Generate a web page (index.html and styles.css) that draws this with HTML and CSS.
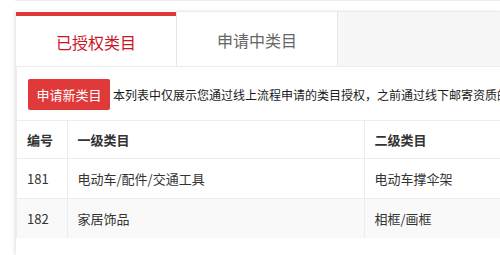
FILE: index.html
```html
<!DOCTYPE html>
<html lang="zh-CN">
<head>
<meta charset="utf-8">
<link rel="stylesheet" href="styles.css">
</head>
<body>
<div class="topline"></div>
<div class="card">
  <div class="tabs">
    <div class="tab active">已授权类目</div>
    <div class="tab">申请中类目</div>
  </div>
  <div class="panel">
    <div class="toolbar">
      <button class="btn">申请新类目</button>
      <span class="notice">本列表中仅展示您通过线上流程申请的类目授权，之前通过线下邮寄资质的类目授权请联系小二查询</span>
    </div>
    <table class="grid">
      <thead>
        <tr><th class="c1">编号</th><th class="c2">一级类目</th><th class="c3">二级类目</th></tr>
      </thead>
      <tbody>
        <tr><td>181</td><td>电动车/配件/交通工具</td><td>电动车撑伞架</td></tr>
        <tr class="alt"><td>182</td><td>家居饰品</td><td>相框/画框</td></tr>
      </tbody>
    </table>
  </div>
</div>
</body>
</html>
```

FILE: styles.css
```css
html, body {
  margin: 0;
  padding: 0;
  background: #fff;
  font-family: "Noto Sans CJK SC", "Noto Sans", sans-serif;
  overflow: hidden;
}
body {
  width: 500px;
  height: 255px;
}
.topline {
  height: 1px;
  margin-left: 15px;
  background: #ececec;
}
.card {
  margin-top: 10px;
  margin-left: 16px;
  width: 484px;
  height: 244px;
  overflow: hidden;
  background: #fff;
  box-shadow: -2px 0 3px rgba(0, 0, 0, 0.09);
}
.tabs {
  display: flex;
  height: 54px;
  background: #f7f7f7;
  border-top: 1px solid #ebebeb;
}
.tab {
  box-sizing: border-box;
  width: 162px;
  height: 54px;
  padding-top: 1px;
  display: flex;
  align-items: center;
  justify-content: center;
  font-size: 16px;
  color: #666;
  background: #fff;
  border-right: 1px solid #e6e6e6;
  border-left: 1px solid #e6e6e6;
}
.tab.active {
  width: 160px;
  height: 55px;
  margin-top: -1px;
  padding-top: 5px;
  color: #cc1424;
  border: none;
  border-top: 1px solid #fff;
  box-shadow: inset 0 4px 0 #e0393a;
}
.panel {
  border-top: 1px solid #ececec;
  border-left: 1px solid #ececec;
}
.toolbar {
  display: flex;
  align-items: center;
  padding: 11px 0 10px 11px;
  height: 32px;
}
.btn {
  flex: none;
  width: 82px;
  height: 31px;
  padding: 0;
  margin-right: 3px;
  border: none;
  border-radius: 2px;
  background: #e0393a;
  color: #fff;
  font-family: inherit;
  font-size: 13px;
}
.notice {
  min-width: 0;
  overflow: hidden;
  font-size: 12px;
  color: #1a1a1a;
  white-space: nowrap;
}
.grid {
  border-collapse: collapse;
  width: 100%;
  table-layout: fixed;
  font-size: 13px;
  color: #333;
}
.grid th, .grid td {
  text-align: left;
  padding: 0 10px;
  border-top: 1px solid #ececec;
  border-left: 1px solid #ececec;
  white-space: nowrap;
  overflow: hidden;
}
.grid th:first-child, .grid td:first-child {
  border-left: none;
}
.grid th {
  height: 37px;
  font-weight: bold;
  color: #333;
}
.grid td {
  height: 39px;
}
.grid .c1 { width: 50px; box-sizing: border-box; }
.grid .c2 { width: 297px; box-sizing: border-box; }
.grid tr.alt td {
  background: #f9f9f9;
}
```
